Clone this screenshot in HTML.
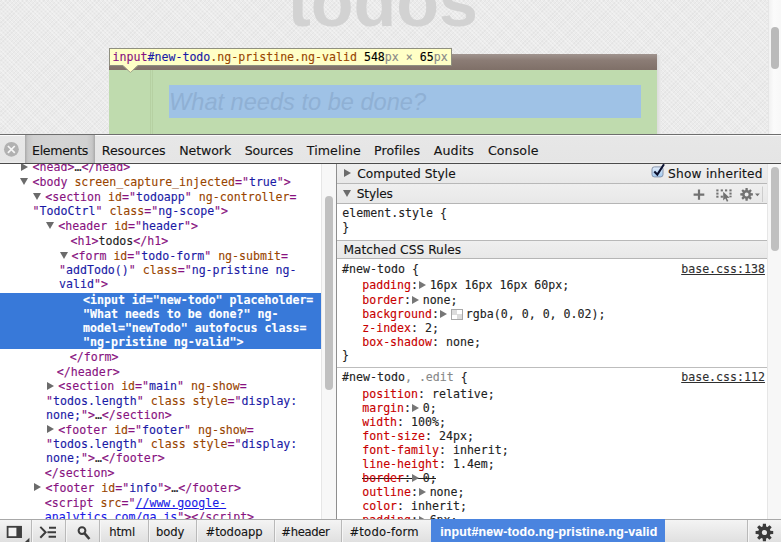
<!DOCTYPE html>
<html><head><meta charset="utf-8"><title>todos</title>
<style>
html,body{margin:0;padding:0}
body{width:781px;height:542px;overflow:hidden;position:relative;background:#fff;font-family:'DejaVu Sans','Liberation Sans',sans-serif}
.abs,.l,.u{position:absolute}
.l{-webkit-text-stroke:0.12px;font-family:'DejaVu Sans Mono','Liberation Mono',monospace;font-size:11.6px;line-height:14px;white-space:pre;color:#222}
.u{-webkit-text-stroke:0.12px;font-family:'DejaVu Sans','Liberation Sans',sans-serif;font-size:12.5px;line-height:16px;white-space:pre;color:#141414}
.t{color:#881280}.an{color:#994500}.av{color:#1a1aa6}.lk{color:#1a1ae6;text-decoration:underline}
.bl{color:#2f2f2f;text-decoration:underline}
.p{color:#c80000}.g{color:#888}
.sel{color:#fff;font-weight:bold}
.tri{position:absolute;width:0;height:0}
.tr{border-left:7.6px solid #6b6b6b;border-top:4.1px solid transparent;border-bottom:4.1px solid transparent}
.td{border-top:7.4px solid #6b6b6b;border-left:4.2px solid transparent;border-right:4.2px solid transparent}
.pt{display:inline-block;width:0;height:0;border-left:7px solid #777;border-top:4px solid transparent;border-bottom:4px solid transparent;margin:0 3.6px 0 1px;vertical-align:0px}
.sw{display:inline-block;width:12px;height:11px;border:1px solid #a8a8a8;box-sizing:border-box;margin:0 2.7px 0 0.6px;vertical-align:-2px;background:conic-gradient(#fff 25%,#dcdcdc 0,#dcdcdc 50%,#fff 0,#fff 75%,#dcdcdc 0)}
.hd{position:absolute;left:337px;width:430px;background:linear-gradient(#efefef,#e8e8e8);border-top:1px solid #b8b8b8;box-sizing:border-box}
.dv{position:absolute;top:520px;width:1px;height:22px;background:#b9b9b9;box-shadow:1px 0 0 #f6f6f6}
</style></head><body>
<!-- page area -->
<div class="abs" id="page" style="left:0;top:0;width:781px;height:134px;background:repeating-linear-gradient(45deg,rgba(255,255,255,.3) 0,rgba(255,255,255,.3) 1px,transparent 1px,transparent 3px),repeating-linear-gradient(-45deg,rgba(0,0,0,.03) 0,rgba(0,0,0,.03) 1px,transparent 1px,transparent 3px),#ebebeb;overflow:hidden">
  <div class="abs" style="left:287.5px;top:-38px;font-family:'Liberation Sans',sans-serif;font-weight:bold;font-size:70px;line-height:80px;color:#d2d2d2">todos</div>
  <div class="abs" style="left:657px;top:55px;width:4px;height:79px;background:linear-gradient(90deg,#dcdcdc,#ebebeb)"></div>
  <div class="abs" style="left:108.5px;top:54px;width:548.5px;height:15.6px;background:linear-gradient(#a0948f,#8b7c75 40%,#7f7068)"></div>
  <div class="abs" style="left:108.5px;top:69.6px;width:548.5px;height:64.4px;background:#bfdbae"></div>
  <div class="abs" style="left:149.5px;top:69.6px;width:1px;height:65px;background:#b6d0a2"></div>
  <div class="abs" style="left:152px;top:69.6px;width:1px;height:65px;background:#b6d0a2"></div>
  <div class="abs" style="left:169px;top:84.8px;width:471.7px;height:33.2px;background:#9fc2e6"></div>
  <div class="abs" style="left:169px;top:87px;font-family:'Liberation Sans',sans-serif;font-style:italic;font-size:23.6px;line-height:30px;color:#8fb0d4;white-space:pre">What needs to be done?</div>
  <div class="abs" style="left:109px;top:48px;width:342.5px;height:18px;background:#ffffc6;border:1px solid #8f8f80;box-sizing:border-box"></div>
  <div class="l" style="left:112.6px;top:50.2px;"><span class="t">input</span><span class="av">#new-todo</span><span class="an">.ng-pristine.ng-valid</span> <span style="color:#000">548</span><span class="g">px × </span><span style="color:#000">65</span><span class="g">px</span></div>
  <div class="abs" style="left:768px;top:0;width:13px;height:134px;background:linear-gradient(90deg,#f1f1f1,#fbfbfb 40%,#f8f8f8);border-left:1px solid #e6e6e6;box-sizing:border-box"></div>
  <div class="abs" style="left:771px;top:27px;width:8px;height:41.5px;border-radius:4px;background:#bababa"></div>
</div>
<!-- toolbar -->
<div class="abs" style="left:0;top:134px;width:781px;height:30px;background:linear-gradient(#fbfbfb 0,#fbfbfb 1px,#e7e7e7 1px,#e5e5e5 26px,#efefef 28px);border-top:1px solid #6e6e6e;border-bottom:1px solid #4c4c4c;box-sizing:border-box"></div>
<div class="abs" style="left:25px;top:135px;width:70px;height:28px;background:linear-gradient(90deg,#a9a9a9,#c6c6c6 4%,#d1d1d1 12%,#d4d4d4 50%,#d1d1d1 88%,#c6c6c6 96%,#a9a9a9);box-sizing:border-box"></div>
<svg class="abs" style="left:3px;top:141px" width="17" height="17" viewBox="0 0 17 17"><circle cx="8.4" cy="8.35" r="7.4" fill="#b1b1b1"/><path d="M4.9 5l6.9 6.9M11.8 5l-6.9 6.9" stroke="#f6f6f6" stroke-width="1.7" stroke-linecap="butt"/></svg>
<div class="u" style="left:32.0px;top:142.6px;font-size:12.6px;letter-spacing:-0.33px;">Elements</div>
<div class="u" style="left:101.8px;top:142.6px;font-size:12.6px;letter-spacing:-0.06px;">Resources</div>
<div class="u" style="left:179.2px;top:142.6px;font-size:12.6px;letter-spacing:-0.10px;">Network</div>
<div class="u" style="left:244.7px;top:142.6px;font-size:12.6px;letter-spacing:-0.20px;">Sources</div>
<div class="u" style="left:306.8px;top:142.6px;font-size:12.6px;letter-spacing:0.07px;">Timeline</div>
<div class="u" style="left:374.1px;top:142.6px;font-size:12.6px;letter-spacing:0.03px;">Profiles</div>
<div class="u" style="left:433.7px;top:142.6px;font-size:12.6px;letter-spacing:0.13px;">Audits</div>
<div class="u" style="left:487.9px;top:142.6px;font-size:12.6px;letter-spacing:0.11px;">Console</div>


<!-- elements panel -->
<div class="abs" id="dom" style="left:0;top:164px;width:321px;height:356px;background:#fff"></div>
<div class="abs" style="left:0;top:292.6px;width:321px;height:56.4px;background:#3879d9"></div>
<div class="abs" id="domclip" style="left:0;top:164px;width:321px;height:356px;overflow:hidden"><div class="abs" style="left:0;top:-164px;width:321px;height:542px">
<div class="l" style="left:32.5px;top:160.1px;"><span class="t">&lt;head&gt;</span>…<span class="t">&lt;/head&gt;</span></div>
<div class="l" style="left:32.5px;top:175.0px;"><span class="t">&lt;body </span><span class="an">screen_capture_injected</span><span class="t">="</span><span class="av">true</span><span class="t">"&gt;</span></div>
<div class="l" style="left:45.2px;top:189.9px;"><span class="t">&lt;section </span><span class="an">id</span><span class="t">="</span><span class="av">todoapp</span><span class="t">" </span><span class="an">ng-controller</span><span class="t">=</span></div>
<div class="l" style="left:32.6px;top:204.1px;"><span class="t">"</span><span class="av">TodoCtrl</span><span class="t">" </span><span class="an">class</span><span class="t">="</span><span class="av">ng-scope</span><span class="t">"&gt;</span></div>
<div class="l" style="left:58.3px;top:219.0px;"><span class="t">&lt;header </span><span class="an">id</span><span class="t">="</span><span class="av">header</span><span class="t">"&gt;</span></div>
<div class="l" style="left:70.5px;top:233.9px;"><span class="t">&lt;h1&gt;</span>todos<span class="t">&lt;/h1&gt;</span></div>
<div class="l" style="left:71.5px;top:248.8px;"><span class="t">&lt;form </span><span class="an">id</span><span class="t">="</span><span class="av">todo-form</span><span class="t">" </span><span class="an">ng-submit</span><span class="t">=</span></div>
<div class="l" style="left:59px;top:263.0px;"><span class="t">"</span><span class="av">addTodo()</span><span class="t">" </span><span class="an">class</span><span class="t">="</span><span class="av">ng-pristine ng-</span></div>
<div class="l" style="left:59px;top:277.2px;"><span class="av">valid</span><span class="t">"&gt;</span></div>
<div class="l sel" style="left:83px;top:292.8px;">&lt;input id="new-todo" placeholder=</div>
<div class="l sel" style="left:83px;top:307.0px;">"What needs to be done?" ng-</div>
<div class="l sel" style="left:83px;top:320.8px;">model="newTodo" autofocus class=</div>
<div class="l sel" style="left:83px;top:335.0px;">"ng-pristine ng-valid"&gt;</div>
<div class="l" style="left:69.7px;top:349.6px;"><span class="t">&lt;/form&gt;</span></div>
<div class="l" style="left:56.8px;top:364.5px;"><span class="t">&lt;/header&gt;</span></div>
<div class="l" style="left:58.3px;top:379.4px;"><span class="t">&lt;section </span><span class="an">id</span><span class="t">="</span><span class="av">main</span><span class="t">" </span><span class="an">ng-show</span><span class="t">=</span></div>
<div class="l" style="left:46px;top:393.6px;"><span class="t">"</span><span class="av">todos.length</span><span class="t">" </span><span class="an">class</span><span class="t"> </span><span class="an">style</span><span class="t">="</span><span class="av">display:</span></div>
<div class="l" style="left:46px;top:407.8px;"><span class="av">none;</span><span class="t">"&gt;</span>…<span class="t">&lt;/section&gt;</span></div>
<div class="l" style="left:58.3px;top:422.7px;"><span class="t">&lt;footer </span><span class="an">id</span><span class="t">="</span><span class="av">footer</span><span class="t">" </span><span class="an">ng-show</span><span class="t">=</span></div>
<div class="l" style="left:46px;top:436.9px;"><span class="t">"</span><span class="av">todos.length</span><span class="t">" </span><span class="an">class</span><span class="t"> </span><span class="an">style</span><span class="t">="</span><span class="av">display:</span></div>
<div class="l" style="left:46px;top:451.1px;"><span class="av">none;</span><span class="t">"&gt;</span>…<span class="t">&lt;/footer&gt;</span></div>
<div class="l" style="left:44.7px;top:466.0px;"><span class="t">&lt;/section&gt;</span></div>
<div class="l" style="left:45.5px;top:480.9px;"><span class="t">&lt;footer </span><span class="an">id</span><span class="t">="</span><span class="av">info</span><span class="t">"&gt;</span>…<span class="t">&lt;/footer&gt;</span></div>
<div class="l" style="left:44.7px;top:495.8px;"><span class="t">&lt;script </span><span class="an">src</span><span class="t">="</span><span class="lk">//www.google-</span></div>
<div class="l" style="left:44.7px;top:510.0px;"><span class="lk">analytics.com/ga.js</span><span class="t">"&gt;&lt;/script&gt;</span></div>
<div class="tri tr" style="left:21px;top:163px"></div>
<div class="tri td" style="left:20.3px;top:178.1px"></div>
<div class="tri td" style="left:32.8px;top:193.1px"></div>
<div class="tri td" style="left:45.8px;top:222.1px"></div>
<div class="tri td" style="left:60.3px;top:252.1px"></div>
<div class="tri tr" style="left:47.2px;top:382.3px"></div>
<div class="tri tr" style="left:47.2px;top:425.3px"></div>
<div class="tri tr" style="left:33.5px;top:483.3px"></div>

</div></div>
<!-- dom scrollbar -->
<div class="abs" style="left:321px;top:164px;width:15px;height:356px;background:#f7f7f7;border-left:1px solid #e6e6e6;box-sizing:border-box"></div>
<div class="abs" style="left:325px;top:196px;width:8px;height:193.6px;border-radius:4px;background:#c0c0c0"></div>
<div class="abs" style="left:336px;top:164px;width:1px;height:356px;background:#8e8e8e"></div>

<!-- sidebar -->
<div class="abs" id="side" style="left:337px;top:164px;width:430px;height:356px;background:#fff"></div>
<div class="hd" style="top:164px;height:19px;border-top:none"></div>
<div class="hd" style="top:183px;height:21px;border-bottom:1px solid #b5b5b5"></div>
<div class="hd" style="top:240px;height:19px;border-bottom:1px solid #b5b5b5"></div>
<div class="abs" style="left:337px;top:367px;width:430px;height:1px;background:#bdbdbd"></div>
<div class="tri tr" style="left:343.8px;top:169px"></div>
<div class="tri td" style="left:343px;top:190.3px"></div>
<div class="u" style="left:357.2px;top:165.9px;font-size:12.2px;letter-spacing:0.05px;">Computed Style</div>
<div class="u" style="left:356.7px;top:186.4px;font-size:12.2px;letter-spacing:-0.14px;">Styles</div>
<div class="u" style="left:343.4px;top:241.7px;font-size:12.2px;letter-spacing:0.05px;">Matched CSS Rules</div>
<div class="u" style="left:668.0px;top:165.9px;font-size:12.2px;letter-spacing:0.23px;">Show inherited</div>

<div class="abs" id="sideclip" style="left:337px;top:164px;width:430px;height:356px;overflow:hidden"><div class="abs" style="left:-337px;top:-164px;width:781px;height:542px">
<div class="l" style="left:342.3px;top:205.8px;">element.style {</div>
<div class="l" style="left:342.3px;top:219.8px;">}</div>
<div class="l" style="left:342.1px;top:262.3px;">#new-todo {</div>
<div class="l" style="left:362.2px;top:278.4px;"><span class="p">padding</span>:<span class="pt"></span>16px 16px 16px 60px;</div>
<div class="l" style="left:362.2px;top:292.6px;"><span class="p">border</span>:<span class="pt"></span>none;</div>
<div class="l" style="left:362.2px;top:306.8px;"><span class="p">background</span>:<span class="pt"></span><span class="sw"></span>rgba(0, 0, 0, 0.02);</div>
<div class="l" style="left:362.2px;top:321.0px;"><span class="p">z-index</span>: 2;</div>
<div class="l" style="left:362.2px;top:335.2px;"><span class="p">box-shadow</span>: none;</div>
<div class="l" style="left:342.1px;top:348.0px;">}</div>
<div class="l" style="left:342.1px;top:370.3px;">#new-todo<span class="g">, .edit</span> {</div>
<div class="l" style="left:362.2px;top:387.3px;"><span class="p">position</span>: relative;</div>
<div class="l" style="left:362.2px;top:401.3px;"><span class="p">margin</span>:<span class="pt"></span>0;</div>
<div class="l" style="left:362.2px;top:415.2px;"><span class="p">width</span>: 100%;</div>
<div class="l" style="left:362.2px;top:429.2px;"><span class="p">font-size</span>: 24px;</div>
<div class="l" style="left:362.2px;top:443.1px;"><span class="p">font-family</span>: inherit;</div>
<div class="l" style="left:362.2px;top:457.1px;"><span class="p">line-height</span>: 1.4em;</div>
<div class="abs" style="left:362.4px;top:477.5px;width:74px;height:1px;background:#1c1c1c"></div>
<div class="l" style="left:362.2px;top:471.1px;"><span class="p">border</span>:<span class="pt"></span>0;</div>
<div class="l" style="left:362.2px;top:485.0px;"><span class="p">outline</span>:<span class="pt"></span>none;</div>
<div class="l" style="left:362.2px;top:499.0px;"><span class="p">color</span>: inherit;</div>
<div class="l" style="left:362.2px;top:512.9px;"><span class="p">padding</span>:<span class="pt"></span>6px;</div>
<div class="l" style="left:681.2px;top:262.1px;"><span class="bl">base.css:138</span></div>
<div class="l" style="left:681.2px;top:370.3px;"><span class="bl">base.css:112</span></div>
</div></div>
<div class="abs" style="left:767px;top:164px;width:14px;height:356px;background:#f7f7f7;border-left:1px solid #e6e6e6;box-sizing:border-box"></div>
<div class="abs" style="left:771px;top:166.7px;width:8px;height:84px;border-radius:4px;background:#c0c0c0"></div>

<!-- bottom bar -->
<div class="abs" style="left:0;top:519px;width:781px;height:23px;background:linear-gradient(#f4f4f4,#e0e0e0);border-top:1px solid #a8a8a8;box-sizing:border-box"></div>
<div class="abs" style="left:431px;top:519px;width:234px;height:23px;background:#4a84df"></div>
<div class="dv" style="left:31px"></div><div class="dv" style="left:65px"></div><div class="dv" style="left:99px"></div>
<div class="dv" style="left:148px"></div><div class="dv" style="left:196px"></div><div class="dv" style="left:274px"></div><div class="dv" style="left:341px"></div>
<div class="dv" style="left:747px"></div>
<div class="u" style="left:109.3px;top:524.4px;font-size:11.6px;letter-spacing:-0.16px;">html</div>
<div class="u" style="left:156.1px;top:524.4px;font-size:11.6px;letter-spacing:-0.17px;">body</div>
<div class="u" style="left:205.5px;top:524.4px;font-size:11.6px;letter-spacing:-0.08px;">#todoapp</div>
<div class="u" style="left:281.3px;top:524.4px;font-size:11.6px;letter-spacing:-0.34px;">#header</div>
<div class="u" style="left:349.4px;top:524.4px;font-size:11.6px;letter-spacing:0.22px;">#todo-form</div>
<div class="u" style="left:440.2px;top:524.1px;font-size:12.4px;letter-spacing:0.19px;font-weight:bold;color:#fff;font-family:'Liberation Sans',sans-serif;">input#new-todo.ng-pristine.ng-valid</div>


<!-- icons -->
<svg class="abs" style="left:0;top:0;pointer-events:none" width="781" height="542" viewBox="0 0 781 542">
<defs><linearGradient id="cb" x1="0" y1="0" x2="0" y2="1"><stop offset="0" stop-color="#e4eefb"/><stop offset="1" stop-color="#9fc8f0"/></linearGradient></defs>
<rect x="652" y="166.9" width="11" height="10" rx="2.3" fill="url(#cb)" stroke="#8594ad" stroke-width="1"/>
<path d="M654.3 171.6L657.3 174.6L664 164.3" fill="none" stroke="#0b1130" stroke-width="2.1" stroke-linejoin="miter"/>
<path d="M699 189.4V199.8M693.6 194.6H704.3" stroke="#717171" stroke-width="2.2" fill="none"/>
<g fill="#727272">
<rect x="716.3" y="189.4" width="2.2" height="2"/><rect x="720.7" y="189.4" width="2.2" height="2"/><rect x="725" y="189.4" width="2.2" height="2"/><rect x="729.4" y="189.4" width="2.2" height="2"/>
<rect x="716.3" y="192.6" width="2.2" height="2"/><rect x="716.3" y="195.7" width="2.2" height="2"/>
<rect x="720.7" y="195.7" width="2.2" height="2"/>
<rect x="729.4" y="192.6" width="2.2" height="2"/><rect x="729.4" y="195.7" width="2.2" height="1.6"/>
<path d="M723.2 191.8L723.2 200.4L725.3 198.6L726.9 201.8L728.3 201.1L726.8 198L729.6 197.8Z"/>
<path d="M755 193.5H759.8L757.4 196.2Z"/>
</g>
<path d="M749.80 193.10L752.90 193.30L752.90 195.50L749.80 195.70ZM749.78 195.74L751.84 198.07L750.27 199.64L747.94 197.58ZM747.90 197.60L747.71 200.70L745.50 200.70L745.30 197.60ZM745.26 197.58L742.93 199.64L741.36 198.07L743.42 195.74ZM743.40 195.70L740.30 195.50L740.30 193.30L743.40 193.10ZM743.42 193.06L741.36 190.73L742.93 189.16L745.26 191.22ZM745.30 191.20L745.50 188.10L747.71 188.10L747.90 191.20ZM747.94 191.22L750.27 189.16L751.84 190.73L749.78 193.06Z" fill="#727272"/><path d="M742.20 194.40a4.4 4.4 0 1 0 8.8 0a4.4 4.4 0 1 0 -8.8 0ZM744.60 194.40a2.0 2.0 0 1 1 4.0 0a2.0 2.0 0 1 1 -4.0 0Z" fill="#727272" fill-rule="evenodd"/>
<rect x="762" y="186.5" width="1" height="15.5" fill="#cdcdcd"/>
<!-- bottom-left icons -->
<rect x="7.6" y="526.8" width="13.3" height="10.3" fill="#f2f2f2" stroke="#3f3f3f" stroke-width="1.8"/>
<rect x="16.4" y="526" width="5.4" height="12" fill="#3f3f3f"/>
<path d="M25 542H29.4V537.8Z" fill="#3f3f3f"/>
<path d="M40.3 526.9L45.6 532.3L40.3 537.7" fill="none" stroke="#3c3c3c" stroke-width="2"/>
<path d="M49 527.8H56M47.4 532.3H56M48.6 536.8H56" stroke="#3c3c3c" stroke-width="1.9" fill="none"/>
<circle cx="82" cy="530.6" r="3.4" fill="none" stroke="#3c3c3c" stroke-width="2"/>
<path d="M84.6 533.4L89.4 539" stroke="#3c3c3c" stroke-width="2.6" fill="none"/>
<path d="M769.40 530.70L773.20 530.97L773.20 534.03L769.40 534.30ZM769.21 534.76L771.70 537.64L769.54 539.80L766.66 537.31ZM766.20 537.50L765.93 541.30L762.87 541.30L762.60 537.50ZM762.14 537.31L759.26 539.80L757.10 537.64L759.59 534.76ZM759.40 534.30L755.60 534.03L755.60 530.97L759.40 530.70ZM759.59 530.24L757.10 527.36L759.26 525.20L762.14 527.69ZM762.60 527.50L762.87 523.70L765.93 523.70L766.20 527.50ZM766.66 527.69L769.54 525.20L771.70 527.36L769.21 530.24Z" fill="#3a3a3a"/><path d="M758.20 532.50a6.2 6.2 0 1 0 12.4 0a6.2 6.2 0 1 0 -12.4 0ZM761.80 532.50a2.6 2.6 0 1 1 5.2 0a2.6 2.6 0 1 1 -5.2 0Z" fill="#3a3a3a" fill-rule="evenodd"/>
<!-- tooltip arrow -->
<path d="M122.4 64.6L130.4 72.3L138.4 64.6Z" fill="#ffffc6"/>
<path d="M122.4 65.6L130.4 72.4L138.4 65.6" fill="none" stroke="#9a9a86" stroke-width="0.8"/>
</svg>
</body></html>
